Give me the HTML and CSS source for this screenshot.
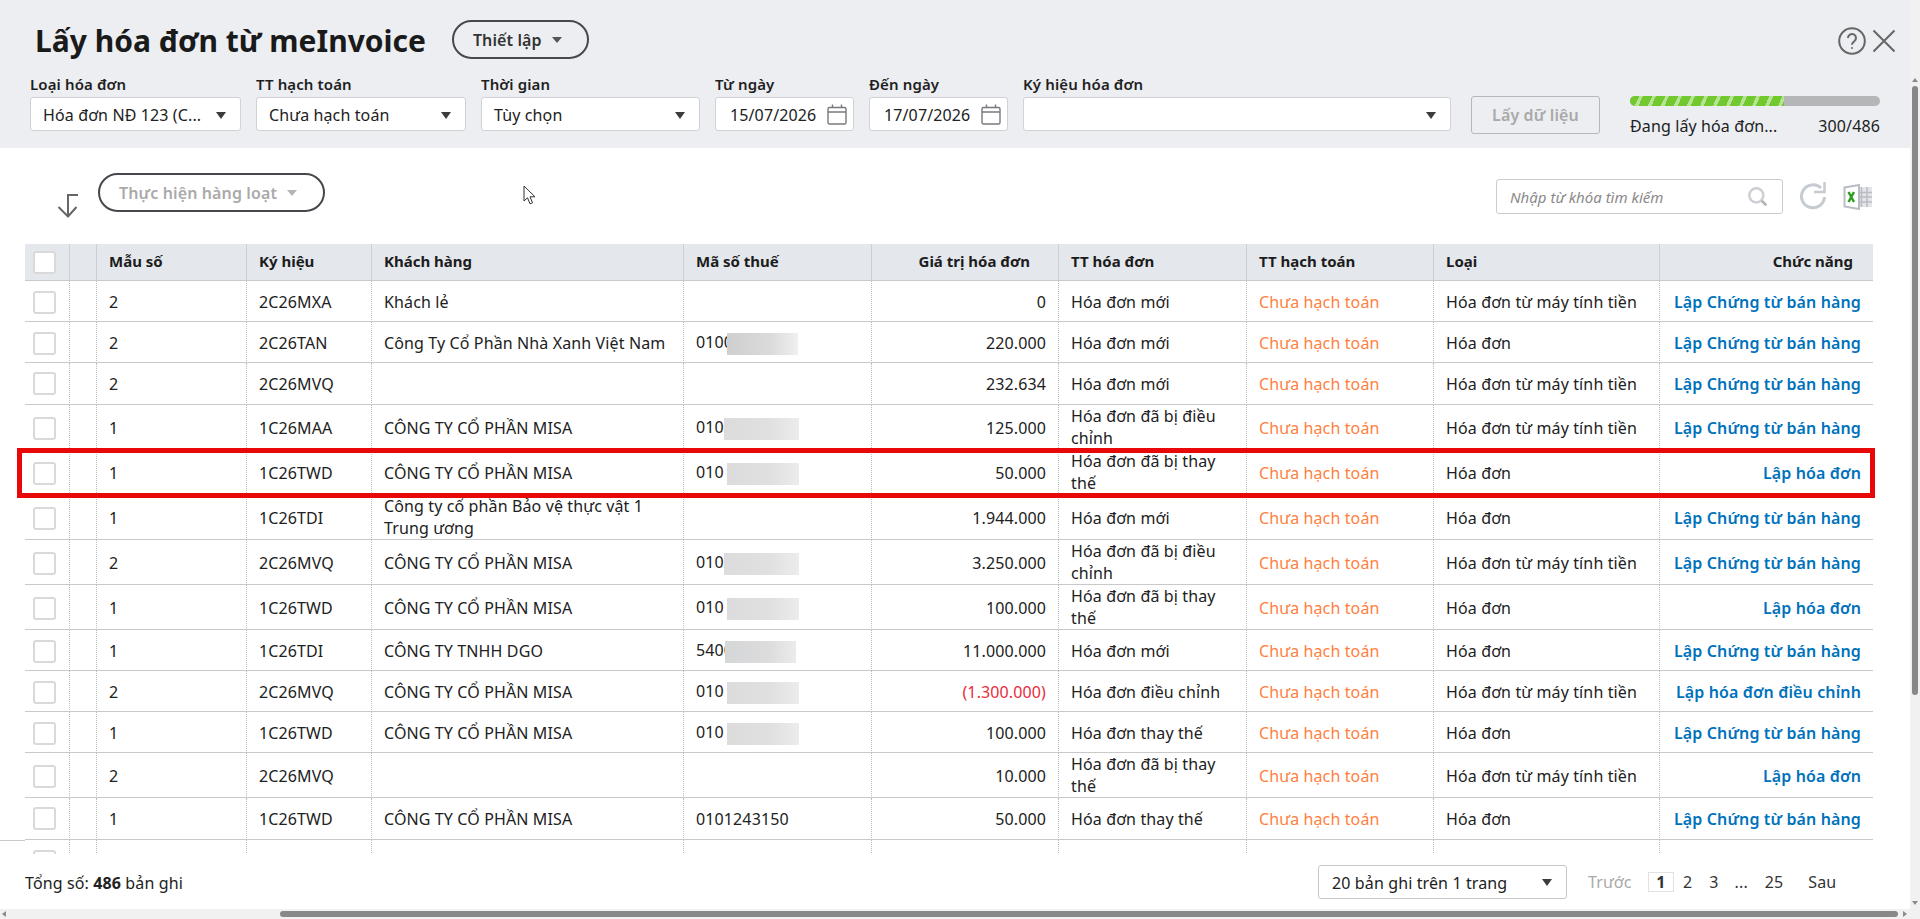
FILE: index.html
```html
<!DOCTYPE html>
<html lang="vi">
<head>
  <meta charset="UTF-8">
  <meta name="viewport" content="width=device-width, initial-scale=1.0">
  <title>Lấy hóa đơn từ meInvoice</title>
  <link rel="stylesheet" href="styles.css">
</head>
<body>
  <div class="window">
    <main class="main">
      <header class="head">
        <div class="title-row">
          <h1>Lấy hóa đơn từ meInvoice</h1>
          <button class="pill pill-setup">Thiết lập <i class="caret"></i></button>
          <div class="head-icons">
            <svg width="28" height="28" viewBox="0 0 28 28" fill="none" stroke="#666" stroke-width="2"><circle cx="14" cy="14" r="12.8"/><path d="M10 11a4 4 0 1 1 6.2 3.3c-1.6 1-2.2 1.7-2.2 3.4"/><circle cx="14" cy="21" r="1" fill="#666" stroke="none"/></svg>
            <svg width="24" height="24" viewBox="0 0 24 24" fill="none" stroke="#666" stroke-width="2"><path d="M1.5 1.5l21 21M22.5 1.5l-21 21"/></svg>
          </div>
        </div>
        <div class="filters">
          <div class="field f-type"><label>Loại hóa đơn</label><div class="select"><span>Hóa đơn NĐ 123 (C...</span><i class="caret dark"></i></div></div>
          <div class="field f-status"><label>TT hạch toán</label><div class="select"><span>Chưa hạch toán</span><i class="caret dark"></i></div></div>
          <div class="field f-time"><label>Thời gian</label><div class="select"><span>Tùy chọn</span><i class="caret dark"></i></div></div>
          <div class="field f-date"><label>Từ ngày</label><div class="select date"><span>15/07/2026</span>
            <svg class="cal" width="20" height="21" viewBox="0 0 20 21" fill="none" stroke="#77797e" stroke-width="1.4"><rect x="1" y="3.5" width="18" height="16.5" rx="1.5"/><path d="M1 8h18M5.5 0.5v3M14.5 0.5v3"/></svg></div></div>
          <div class="field f-date"><label>Đến ngày</label><div class="select date"><span>17/07/2026</span>
            <svg class="cal" width="20" height="21" viewBox="0 0 20 21" fill="none" stroke="#77797e" stroke-width="1.4"><rect x="1" y="3.5" width="18" height="16.5" rx="1.5"/><path d="M1 8h18M5.5 0.5v3M14.5 0.5v3"/></svg></div></div>
          <div class="field f-symbol"><label>Ký hiệu hóa đơn</label><div class="select"><span></span><i class="caret dark"></i></div></div>
          <button class="btn-fetch">Lấy dữ liệu</button>
          <div class="progress">
            <div class="bar"><div class="bar-fill"></div></div>
            <div class="progress-text"><span>Đang lấy hóa đơn...</span><span>300/486</span></div>
          </div>
        </div>
      </header>

      <section class="toolbar">
        <svg class="arrow-down" width="24" height="25" viewBox="0 0 24 25" fill="none" stroke="#666" stroke-width="2"><path d="M22 2H12v21M2.500 14l9.500 9.500L20.500 14"/></svg>
        <button class="pill pill-batch">Thực hiện hàng loạt <i class="caret light"></i></button>
        <svg class="mouse" width="14" height="20" viewBox="0 0 14 20"><path d="M1 1v15l3.500-3.200 2.500 6 2.500-1-2.500-6H12z" fill="#fff" stroke="#333" stroke-width="1"/></svg>
        <div class="tools">
          <div class="search"><span>Nhập từ khóa tìm kiếm</span>
            <svg width="20" height="20" viewBox="0 0 24 24" fill="none" stroke="#ccd0d5" stroke-width="3"><circle cx="10" cy="10" r="8.500"/><path d="M16.500 16.500l5.500 5.500" stroke="#aeb2b7"/></svg>
          </div>
          <svg class="refresh" width="28" height="30" viewBox="0 0 28 30" fill="none" stroke="#c6cbd1" stroke-width="3"><path d="M22 6A11.500 11.500 0 1 0 25.500 15"/><path d="M25.500 0v10H15" stroke-width="2.500"/></svg>
          <svg class="excel" width="30" height="26" viewBox="0 0 30 26"><rect x="13" y="3" width="16" height="20" fill="#e3e5e8"/><path d="M13 8.500h16M13 13h16M13 18h16M18.500 3v20M24 3v20" stroke="#b9bdc3" stroke-width="1.500"/><path d="M1.500 3.500L16 1v24L1.500 22.500z" fill="#fff" stroke="#b9bdc3" stroke-width="2"/><path d="M5.500 8l5.500 10M11 8L5.500 18" stroke="#2f9e1f" stroke-width="2.500"/></svg>
        </div>
      </section>

      <section class="grid-wrap">
        <table class="grid">
          <colgroup>
            <col class="c1"><col class="c2"><col class="c3"><col class="c4"><col class="c5"><col class="c6"><col class="c7"><col class="c8"><col class="c9"><col class="c10"><col class="c11">
          </colgroup>
          <thead>
            <tr>
              <th class="chk"><i class="box"></i></th><th></th><th>Mẫu số</th><th>Ký hiệu</th><th>Khách hàng</th><th>Mã số thuế</th>
              <th class="num-head">Giá trị hóa đơn</th><th>TT hóa đơn</th><th>TT hạch toán</th><th>Loại</th><th class="act-head">Chức năng</th>
            </tr>
          </thead>
          <tbody>
            <tr class="h41"><td class="chk"><i class="box"></i></td><td></td><td>2</td><td>2C26MXA</td><td>Khách lẻ</td><td></td><td class="num">0</td><td>Hóa đơn mới</td><td class="warn">Chưa hạch toán</td><td>Hóa đơn từ máy tính tiền</td><td class="act"><a>Lập Chứng từ bán hàng</a></td></tr>
            <tr class="h41"><td class="chk"><i class="box"></i></td><td></td><td>2</td><td>2C26TAN</td><td>Công Ty Cổ Phần Nhà Xanh Việt Nam</td><td>0100<i class="mask m1"></i></td><td class="num">220.000</td><td>Hóa đơn mới</td><td class="warn">Chưa hạch toán</td><td>Hóa đơn</td><td class="act"><a>Lập Chứng từ bán hàng</a></td></tr>
            <tr class="h42"><td class="chk"><i class="box"></i></td><td></td><td>2</td><td>2C26MVQ</td><td></td><td></td><td class="num">232.634</td><td>Hóa đơn mới</td><td class="warn">Chưa hạch toán</td><td>Hóa đơn từ máy tính tiền</td><td class="act"><a>Lập Chứng từ bán hàng</a></td></tr>
            <tr class="h45"><td class="chk"><i class="box"></i></td><td></td><td>1</td><td>1C26MAA</td><td>CÔNG TY CỔ PHẦN MISA</td><td>010<i class="mask m2"></i></td><td class="num">125.000</td><td class="two">Hóa đơn đã bị điều chỉnh</td><td class="warn">Chưa hạch toán</td><td>Hóa đơn từ máy tính tiền</td><td class="act"><a>Lập Chứng từ bán hàng</a></td></tr>
            <tr class="h45"><td class="chk"><i class="box"></i></td><td></td><td>1</td><td>1C26TWD</td><td>CÔNG TY CỔ PHẦN MISA</td><td>010<i class="mask m3"></i></td><td class="num">50.000</td><td class="two">Hóa đơn đã bị thay thế</td><td class="warn">Chưa hạch toán</td><td>Hóa đơn</td><td class="act"><a>Lập hóa đơn</a></td></tr>
            <tr class="h45"><td class="chk"><i class="box"></i></td><td></td><td>1</td><td>1C26TDI</td><td class="two">Công ty cổ phần Bảo vệ thực vật 1 Trung ương</td><td></td><td class="num">1.944.000</td><td>Hóa đơn mới</td><td class="warn">Chưa hạch toán</td><td>Hóa đơn</td><td class="act"><a>Lập Chứng từ bán hàng</a></td></tr>
            <tr class="h45"><td class="chk"><i class="box"></i></td><td></td><td>2</td><td>2C26MVQ</td><td>CÔNG TY CỔ PHẦN MISA</td><td>010<i class="mask m2"></i></td><td class="num">3.250.000</td><td class="two">Hóa đơn đã bị điều chỉnh</td><td class="warn">Chưa hạch toán</td><td>Hóa đơn từ máy tính tiền</td><td class="act"><a>Lập Chứng từ bán hàng</a></td></tr>
            <tr class="h45"><td class="chk"><i class="box"></i></td><td></td><td>1</td><td>1C26TWD</td><td>CÔNG TY CỔ PHẦN MISA</td><td>010<i class="mask m3"></i></td><td class="num">100.000</td><td class="two">Hóa đơn đã bị thay thế</td><td class="warn">Chưa hạch toán</td><td>Hóa đơn</td><td class="act"><a>Lập hóa đơn</a></td></tr>
            <tr class="h41"><td class="chk"><i class="box"></i></td><td></td><td>1</td><td>1C26TDI</td><td>CÔNG TY TNHH DGO</td><td>5400<i class="mask m4"></i></td><td class="num">11.000.000</td><td>Hóa đơn mới</td><td class="warn">Chưa hạch toán</td><td>Hóa đơn</td><td class="act"><a>Lập Chứng từ bán hàng</a></td></tr>
            <tr class="h41"><td class="chk"><i class="box"></i></td><td></td><td>2</td><td>2C26MVQ</td><td>CÔNG TY CỔ PHẦN MISA</td><td>010<i class="mask m3"></i></td><td class="num neg">(1.300.000)</td><td>Hóa đơn điều chỉnh</td><td class="warn">Chưa hạch toán</td><td>Hóa đơn từ máy tính tiền</td><td class="act"><a>Lập hóa đơn điều chỉnh</a></td></tr>
            <tr class="h41"><td class="chk"><i class="box"></i></td><td></td><td>1</td><td>1C26TWD</td><td>CÔNG TY CỔ PHẦN MISA</td><td>010<i class="mask m3"></i></td><td class="num">100.000</td><td>Hóa đơn thay thế</td><td class="warn">Chưa hạch toán</td><td>Hóa đơn</td><td class="act"><a>Lập Chứng từ bán hàng</a></td></tr>
            <tr class="h45"><td class="chk"><i class="box"></i></td><td></td><td>2</td><td>2C26MVQ</td><td></td><td></td><td class="num">10.000</td><td class="two">Hóa đơn đã bị thay thế</td><td class="warn">Chưa hạch toán</td><td>Hóa đơn từ máy tính tiền</td><td class="act"><a>Lập hóa đơn</a></td></tr>
            <tr class="h42"><td class="chk"><i class="box"></i></td><td></td><td>1</td><td>1C26TWD</td><td>CÔNG TY CỔ PHẦN MISA</td><td>0101243150</td><td class="num">50.000</td><td>Hóa đơn thay thế</td><td class="warn">Chưa hạch toán</td><td>Hóa đơn</td><td class="act"><a>Lập Chứng từ bán hàng</a></td></tr>
            <tr class="h41"><td class="chk"><i class="box"></i></td><td></td><td></td><td></td><td></td><td></td><td></td><td></td><td></td><td></td><td></td></tr>
          </tbody>
        </table>
        <div class="line-left"></div>
        <div class="red-box"></div>
      </section>

      <footer class="foot">
        <div class="total">Tổng số: <b>486</b> bản ghi</div>
        <div class="select page-size"><span>20 bản ghi trên 1 trang</span><i class="caret dark"></i></div>
        <nav class="pager">
          <span class="prev">Trước</span>
          <b class="cur">1</b>
          <span class="p2">2</span>
          <span class="p3">3</span>
          <span class="dots">...</span>
          <span class="p25">25</span>
          <span class="next">Sau</span>
        </nav>
      </footer>
    </main>

    <div class="vscroll">
      <i class="tri up"></i>
      <div class="vthumb"></div>
      <i class="tri down"></i>
    </div>
    <div class="hscroll">
      <i class="tri left"></i>
      <div class="hthumb"></div>
      <i class="tri right"></i>
    </div>
    <div class="corner"></div>
  </div>
</body>
</html>
```

FILE: styles.css
```css
* {
    box-sizing: border-box;
}

html, body {
    margin: 0;
    padding: 0;
    height: 100%;
    overflow: hidden;
}

body {
    font-family: "Noto Sans", "Open Sans", sans-serif;
    font-size: 16px;
    letter-spacing: 0.12px;
    color: #212121;
    background-color: #fff;
}

.window {
    display: grid;
    grid-template-columns: 1fr 10px;
    grid-template-rows: 909px 10px;
    height: 919px;
}

.main {
    min-width: 0;
    overflow: hidden;
}

/* Header */
.head {
    height: 148px;
    background-color: #eceef2;
    padding-top: 20px;
}

.title-row {
    display: flex;
    align-items: center;
    height: 39px;
    padding-left: 35px;
    padding-right: 14px;
}

.title-row h1 {
    margin: 2px 26px 0 0;
    font-size: 30px;
    line-height: 39px;
    font-weight: 700;
    letter-spacing: 0;
    color: #1a1a1a;
}

.pill {
    display: flex;
    align-items: center;
    gap: 10px;
    height: 39px;
    padding: 0 0 0 19px;
    border: 2px solid #45484d;
    border-radius: 20px;
    background: transparent;
    font-family: inherit;
    font-size: 16px;
    font-weight: 600;
    letter-spacing: inherit;
    color: #333;
}

.pill-setup {
    width: 137px;
}

.pill-batch {
    width: 227px;
    color: #aaa;
    background-color: #fff;
}

.head-icons {
    margin-left: auto;
    display: flex;
    align-items: center;
    gap: 6px;
    margin-top: 3px;
}

.caret {
    display: inline-block;
    width: 0;
    height: 0;
    border-left: 5px solid transparent;
    border-right: 5px solid transparent;
    border-top: 6px solid #555;
}

.caret.dark {
    border-top-color: #3c3c3c;
    border-top-width: 7px;
}

.caret.light {
    border-top-color: #b5b5b5;
}

.filters {
    display: flex;
    align-items: flex-start;
    gap: 15px;
    margin-top: 16px;
    padding-left: 30px;
}

.field label {
    display: block;
    height: 22px;
    line-height: 18px;
    font-weight: 600;
    font-size: 15px;
    color: #1f1f1f;
}

.f-type { width: 211px; }
.f-status { width: 210px; }
.f-time { width: 219px; }
.f-date { width: 139px; }
.f-symbol { width: 428px; }

.select {
    display: flex;
    align-items: center;
    justify-content: space-between;
    height: 34px;
    padding: 2px 14px 0 12px;
    background-color: #fff;
    border: 1px solid #cfd2d7;
    border-radius: 3px;
    white-space: nowrap;
}

.select.date {
    padding: 2px 6px 0 14px;
}

.cal {
    margin-top: -2px;
}

.btn-fetch {
    width: 129px;
    height: 38px;
    margin-left: 5px;
    margin-top: 21px;
    border: 1px solid #b4b7bc;
    border-radius: 3px;
    background-color: #eceef2;
    color: #a9a9a9;
    font-family: inherit;
    font-size: 16px;
    font-weight: 600;
    letter-spacing: inherit;
}

.progress {
    width: 250px;
    margin-left: 15px;
    margin-top: 21px;
}

.bar {
    height: 10px;
    border-radius: 5px;
    background-color: #b5b6b8;
    overflow: hidden;
}

.bar-fill {
    width: 154px;
    height: 10px;
    background: repeating-linear-gradient(115deg, #72c92f 0, #72c92f 8.5px, #b7e394 8.5px, #b7e394 11.8px);
}

.progress-text {
    display: flex;
    justify-content: space-between;
    margin-top: 9px;
    line-height: 22px;
}

/* Toolbar */
.toolbar {
    position: relative;
    display: flex;
    align-items: flex-start;
    height: 96px;
    padding: 25px 0 0 56px;
}

.arrow-down {
    margin-top: 20px;
    margin-right: 18px;
}

.mouse {
    position: absolute;
    left: 523px;
    top: 37px;
}

.tools {
    display: flex;
    align-items: center;
    margin-left: auto;
    margin-top: 6px;
    padding-right: 37px;
}

.search {
    display: flex;
    align-items: center;
    justify-content: space-between;
    width: 287px;
    height: 35px;
    padding: 0 14px 0 13px;
    background-color: #fff;
    border: 1px solid #c9ccd1;
    border-radius: 3px;
}

.search span {
    font-style: italic;
    font-size: 15px;
    letter-spacing: 0;
    color: #8a8a8a;
}

.refresh {
    margin-left: 16px;
}

.excel {
    margin-left: 16px;
}

/* Grid */
.grid-wrap {
    position: relative;
    height: 610px;
    padding-left: 25px;
    overflow: hidden;
}

.grid {
    width: 1848px;
    table-layout: fixed;
    border-collapse: separate;
    border-spacing: 0;
    line-height: 22px;
}

.c1 { width: 45px; }
.c2 { width: 27px; }
.c3 { width: 150px; }
.c4 { width: 125px; }
.c5 { width: 312px; }
.c6 { width: 188px; }
.c7 { width: 187px; }
.c8 { width: 188px; }
.c9 { width: 187px; }
.c10 { width: 226px; }
.c11 { width: 213px; }

.grid th {
    height: 37px;
    padding: 0 12px 2px;
    background-color: #e4e7ec;
    border-right: 1px solid #ccd0d6;
    border-bottom: 1px solid #c8cacd;
    text-align: left;
    font-size: 15px;
    font-weight: 700;
    letter-spacing: 0;
    color: #1c1c1c;
}

.grid td {
    padding: 0 12px;
    border-right: 1px dotted #bdbdbd;
    border-bottom: 1px solid #c9c9c9;
    vertical-align: middle;
}

.grid th:last-child, .grid td:last-child {
    border-right: none;
}

.h41 td { height: 41px; }
.h42 td { height: 42px; }
.h45 td { height: 45px; }

/* linhas de 41 e 45 ficam 1px mais baixas */
.grid .h41 td, .grid .h45 td {
    padding-top: 2px;
}

.grid .h45 td.two {
    padding-top: 0;
}

.grid .chk {
    padding: 0 0 0 8px;
}

.box {
    display: block;
    width: 23px;
    height: 23px;
    background-color: #fff;
    border: 2px solid #d9d9d9;
    border-radius: 3px;
}

.grid .num-head {
    text-align: right;
    padding-right: 28px;
}

.grid .act-head {
    text-align: right;
    padding-right: 20px;
}

.num {
    text-align: right;
}

.neg {
    color: #ea2b3d;
}

.warn {
    color: #ff7f3f;
}

.act {
    text-align: right;
    white-space: nowrap;
}

.act a {
    color: #0072bc;
    font-weight: 600;
}

.mask {
    display: inline-block;
    height: 22px;
    vertical-align: middle;
    background: linear-gradient(90deg, #dcdcdc, #e0e0e0 60%, #ececec);
}

.m1 { width: 71px; margin-left: -6px; background: linear-gradient(90deg, #cfcfcf, #dadada 60%, #f0f0f0); }
.m2 { width: 75px; margin-left: 0; }
.m3 { width: 72px; margin-left: 3px; }
.m4 { width: 71px; margin-left: -8px; background: linear-gradient(90deg, #d5d6d8, #dcdcdc 60%, #ebebeb); }

.line-left {
    position: absolute;
    left: 0;
    top: 596px;
    width: 25px;
    height: 1px;
    background-color: #c9c9c9;
}

.red-box {
    position: absolute;
    left: 17px;
    top: 204px;
    width: 1858px;
    height: 50px;
    border: 5px solid #e80808;
}

/* Footer */
.foot {
    position: relative;
    display: flex;
    align-items: center;
    height: 55px;
    padding-left: 25px;
}

.total {
    margin-top: 2px;
}

.total b {
    font-weight: 700;
}

.page-size {
    width: 249px;
    margin-left: auto;
    border-color: #c4c7cc;
    padding: 2px 14px 0 13px;
}

.pager {
    display: flex;
    align-items: center;
    width: 343px;
    padding-left: 21px;
    color: #333;
}

.prev {
    color: #a9a9a9;
    width: 60px;
}

.cur {
    width: 26px;
    height: 20px;
    line-height: 19px;
    text-align: center;
    border: 1px solid #e2e2e2;
    font-weight: 700;
}

.p2 { margin-left: 9px; }
.p3 { margin-left: 17px; }
.dots { margin-left: 16px; }
.p25 { margin-left: 17px; }
.next { margin-left: 25px; }

/* Scrollbars */
.vscroll {
    display: flex;
    flex-direction: column;
    align-items: center;
    background-color: #f1f1f1;
    padding-top: 78px;
}

.vthumb {
    width: 6px;
    height: 609px;
    margin-top: 4px;
    background-color: #888;
    border-radius: 3px;
}

.vscroll .down {
    margin-top: auto;
    margin-bottom: 4px;
}

.hscroll {
    position: relative;
    display: flex;
    align-items: center;
    background-color: #f1f1f1;
    padding-left: 2px;
}

.hthumb {
    width: 1618px;
    height: 6px;
    margin-left: 274px;
    background-color: #888;
    border-radius: 3px;
}

.hscroll .right {
    margin-left: 5px;
}

.corner {
    background-color: #f1f1f1;
}

.tri {
    display: block;
    width: 0;
    height: 0;
}

.tri.up {
    border-left: 3px solid transparent;
    border-right: 3px solid transparent;
    border-bottom: 4px solid #8a8a8a;
}

.tri.down {
    border-left: 3px solid transparent;
    border-right: 3px solid transparent;
    border-top: 4px solid #8a8a8a;
}

.tri.left {
    border-top: 3px solid transparent;
    border-bottom: 3px solid transparent;
    border-right: 4px solid #8a8a8a;
}

.tri.right {
    border-top: 3px solid transparent;
    border-bottom: 3px solid transparent;
    border-left: 4px solid #8a8a8a;
}
```
